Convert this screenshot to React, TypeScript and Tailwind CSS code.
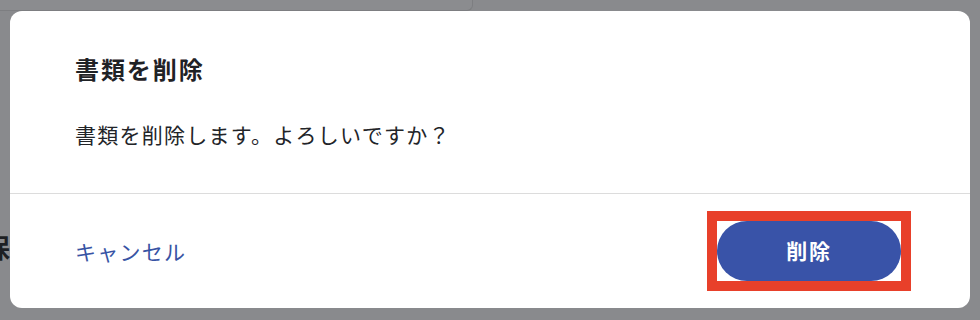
import React from "react";

const jpFont = {
  fontFamily: '"Noto Sans CJK JP", "Noto Sans", sans-serif',
};

export default function App() {
  return (
    <div
      className="relative h-[320px] w-[980px] overflow-hidden bg-[#898a8d]"
      style={jpFont}
    >
      {/* page behind the overlay */}
      <div className="flex h-[11px]">
        <div className="h-[11px] w-[473px] rounded-br-[6px] border-b border-r border-[#7d7e81] bg-[#8b8c8f]" />
      </div>
      <div className="mt-[223px] text-[26px] font-bold leading-none text-[#1d1f23]">
        <span className="-ml-[16px]">保存</span>
      </div>

      {/* dialog */}
      <div className="absolute left-[10px] top-[11px] flex h-[297px] w-[960px] flex-col rounded-[12px] bg-white">
        <div className="px-[65px] pt-[40px]">
          <h2 className="text-[24px] font-bold leading-[36px] tracking-[0.08em] text-[#1f2226]">
            書類を削除
          </h2>
          <p className="mt-[32px] text-[21px] leading-[30px] tracking-[0.06em] text-[#222428]">
            書類を削除します。よろしいですか？
          </p>
        </div>

        <div className="mt-[44px] border-t border-[#dcdcdc]" />

        <div className="flex flex-1 items-center justify-between pl-[65px] pr-[59px]">
          <button
            type="button"
            className="text-[21px] leading-[30px] tracking-[0.06em] text-[#3753a4]"
          >
            キャンセル
          </button>
          <div className="border-[10px] border-[#e8402a]">
            <button
              type="button"
              className="flex h-[60px] w-[184px] items-center justify-center rounded-full bg-[#3953a8] text-[21px] font-bold tracking-[0.08em] text-white"
            >
              削除
            </button>
          </div>
        </div>
      </div>
    </div>
  );
}
